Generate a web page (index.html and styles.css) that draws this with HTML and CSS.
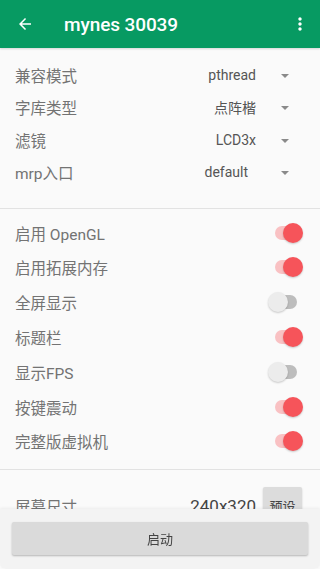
FILE: index.html
```html
<!DOCTYPE html>
<html lang="zh">
<head>
  <meta charset="UTF-8" />
  <meta name="viewport" content="width=device-width, initial-scale=1.0"/>
  <title>mynes 30039</title>
  <link rel="stylesheet" href="styles.css">
</head>
<body>
  <header class="appbar">
    <svg class="appbar-back" viewBox="0 0 24 24"><path d="M20 11H7.83l5.59-5.59L12 4l-8 8 8 8 1.41-1.41L7.83 13H20v-2z"/></svg>
    <h1 class="appbar-title">mynes 30039</h1>
    <svg class="appbar-more" viewBox="0 0 24 24"><path d="M12 8c1.1 0 2-.9 2-2s-.9-2-2-2-2 .9-2 2 .9 2 2 2zm0 2c-1.1 0-2 .9-2 2s.9 2 2 2 2-.9 2-2-.9-2-2-2zm0 6c-1.1 0-2 .9-2 2s.9 2 2 2 2-.9 2-2-.9-2-2-2z"/></svg>
  </header>

  <main class="settings">
    <section class="group group-spinners">
      <div class="row">
        <span class="label">兼容模式</span>
        <span class="spinner"><span class="spinner-value">pthread</span><span class="caret"></span></span>
      </div>
      <div class="row">
        <span class="label">字库类型</span>
        <span class="spinner"><span class="spinner-value">点阵楷</span><span class="caret"></span></span>
      </div>
      <div class="row">
        <span class="label">滤镜</span>
        <span class="spinner"><span class="spinner-value">LCD3x</span><span class="caret"></span></span>
      </div>
      <div class="row">
        <span class="label">mrp入口</span>
        <span class="spinner"><span class="spinner-value spinner-value-short">default</span><span class="caret"></span></span>
      </div>
    </section>

    <section class="group group-switches">
      <div class="row row-switch">
        <span class="label">启用 OpenGL</span>
        <span class="switch on"><span class="track"></span><span class="thumb"></span></span>
      </div>
      <div class="row row-switch">
        <span class="label">启用拓展内存</span>
        <span class="switch on"><span class="track"></span><span class="thumb"></span></span>
      </div>
      <div class="row row-switch">
        <span class="label">全屏显示</span>
        <span class="switch"><span class="track"></span><span class="thumb"></span></span>
      </div>
      <div class="row row-switch">
        <span class="label">标题栏</span>
        <span class="switch on"><span class="track"></span><span class="thumb"></span></span>
      </div>
      <div class="row row-switch">
        <span class="label">显示FPS</span>
        <span class="switch"><span class="track"></span><span class="thumb"></span></span>
      </div>
      <div class="row row-switch">
        <span class="label">按键震动</span>
        <span class="switch on"><span class="track"></span><span class="thumb"></span></span>
      </div>
      <div class="row row-switch">
        <span class="label">完整版虚拟机</span>
        <span class="switch on"><span class="track"></span><span class="thumb"></span></span>
      </div>
    </section>

    <section class="group group-size">
      <div class="row row-size">
        <span class="label">屏幕尺寸</span>
        <span class="size-value">240x320</span>
        <button type="button" class="btn-preset">预设</button>
      </div>
    </section>
  </main>

  <footer class="bottom-bar">
    <button type="button" class="btn-start">启动</button>
  </footer>
</body>
</html>
```

FILE: styles.css
```css
* {
    margin: 0;
    padding: 0;
    box-sizing: border-box;
}
html, body {
    height: 100%;
    overflow: hidden;
}
body {
    font-family: Roboto, "Noto Sans CJK SC", sans-serif;
    background: #fafafa;
    color: #666;
}
.appbar {
    height: 48px;
    background: #079a62;
    display: flex;
    align-items: center;
    color: #fff;
    box-shadow: 0 1px 2px rgba(0, 0, 0, 0.15);
}
.appbar-back {
    width: 18px;
    height: 18px;
    margin-left: 16px;
    fill: #fff;
}
.appbar-title {
    font-size: 19px;
    font-weight: 500;
    margin-left: 30px;
    flex: 1;
    letter-spacing: -0.1px;
}
.appbar-more {
    width: 20px;
    height: 20px;
    margin-right: 10px;
    fill: #fff;
}
.group {
    border-bottom: 1px solid #e2e2e2;
}
.group-spinners {
    padding: 11px 0 20px;
}
.group-switches {
    padding: 6px 0 10px;
}
.row {
    display: flex;
    align-items: center;
    height: 32.3px;
    padding: 0 15px;
}
.row-switch {
    height: 34.8px;
}
.label {
    flex: 1;
    font-size: 15.5px;
    color: #737373;
}
.spinner {
    display: flex;
    align-items: center;
}
.spinner-value {
    font-size: 14px;
    color: #555;
}
.spinner-value-short {
    margin-right: 8px;
}
.caret {
    width: 0;
    height: 0;
    border-left: 4px solid transparent;
    border-right: 4px solid transparent;
    border-top: 4px solid #8a8a8a;
    margin: 2px 16px 0 25px;
}
.switch {
    position: relative;
    width: 36px;
    height: 22px;
    margin-right: 1px;
}
.track {
    position: absolute;
    left: 7px;
    top: 4px;
    width: 22px;
    height: 14px;
    border-radius: 7px;
    background: #bdbdbd;
}
.thumb {
    position: absolute;
    left: 0;
    top: 1px;
    width: 20px;
    height: 20px;
    border-radius: 50%;
    background: #ececec;
    box-shadow: 0 1px 2px rgba(0, 0, 0, 0.2);
}
.switch.on .track {
    background: #f9c1c3;
}
.switch.on .thumb {
    left: 15px;
    background: #f6545a;
}
.group-size {
    border-bottom: none;
    padding-top: 16px;
}
.row-size {
    height: 40px;
}
.size-value {
    font-size: 17px;
    color: #444;
    margin-right: 7px;
}
.btn-preset {
    font-family: inherit;
    font-size: 13px;
    color: #444;
    background: #dcdcdc;
    border: none;
    border-radius: 2px;
    width: 39px;
    height: 38px;
    margin-right: 3px;
    box-shadow: 0 1px 2px rgba(0, 0, 0, 0.2);
}
.bottom-bar {
    position: fixed;
    left: 0;
    right: 0;
    bottom: 0;
    height: 60px;
    background: #f3f3f3;
    padding: 13px 12px 0;
    border-radius: 0 0 6px 6px;
    box-shadow: 0 -1px 3px rgba(0, 0, 0, 0.06);
}
.btn-start {
    width: 100%;
    height: 33px;
    font-family: inherit;
    font-size: 13px;
    color: #444;
    background: #dadada;
    border: none;
    border-radius: 2px;
    box-shadow: 0 1px 2px rgba(0, 0, 0, 0.25);
}
```
